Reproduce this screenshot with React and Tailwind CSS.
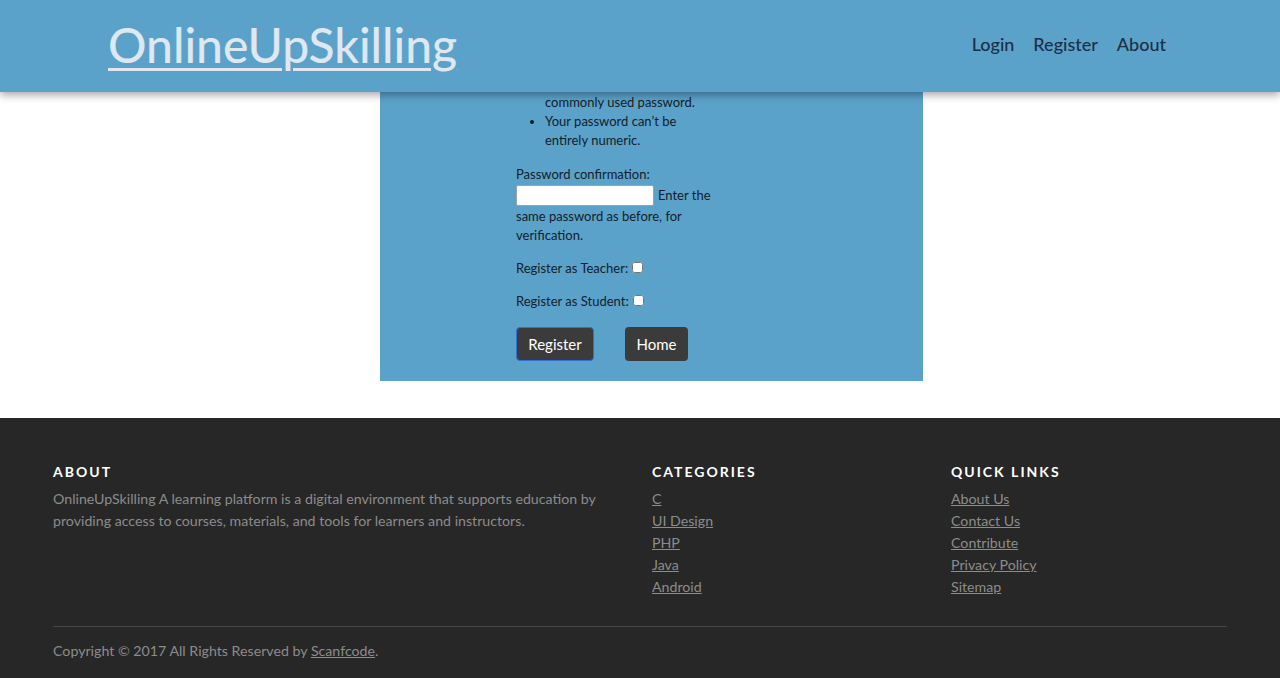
import React from "react";

const font = { fontFamily: "Lato, 'Noto Sans', 'Liberation Sans', sans-serif" };

export default function App() {
  return (
    <div className="relative w-[1280px] h-[678px] overflow-hidden bg-white" style={font}>
      {/* Fixed header overlaying the content */}
      <header className="absolute top-0 left-0 right-0 z-10 h-[92px] bg-[#5ba2ca] shadow-[0_3px_8px_rgba(0,0,0,0.35)] flex items-center justify-between pl-[108px] pr-[114px]">
        <a href="#" className="text-[48px] leading-none font-medium text-[#dfe7f0] underline decoration-[3px] underline-offset-[5px] -mt-[3px]">
          OnlineUpSkilling
        </a>
        <nav className="flex items-center gap-[19px] text-[18px] font-medium text-[#1b2f45] -mt-[3px]">
          <a href="#">Login</a>
          <a href="#">Register</a>
          <a href="#">About</a>
        </nav>
      </header>

      {/* Form box */}
      <div className="flex">
        <div className="ml-[380px] w-[543px] bg-[#5ba2ca] pt-[74px] pb-[20px] pl-[136px] text-[13px] leading-[19px] text-[#121d29]">
          <ul className="list-disc pl-[29px] whitespace-nowrap">
            <li>Your password can’t be a<br />commonly used password.</li>
            <li>Your password can’t be<br />entirely numeric.</li>
          </ul>
          <div className="mt-[15px] whitespace-nowrap">
            <div>Password confirmation:</div>
            <div className="flex items-center h-[23px]">
              <input type="password" className="w-[138px] h-[21px] bg-white border border-[#9aa4ad] rounded-[2px] mr-[4px]" />
              <span>Enter the</span>
            </div>
            <div>same password as before, for<br />verification.</div>
          </div>
          <div className="mt-[14px] flex items-center whitespace-nowrap">
            <span>Register as Teacher:</span>
            <input type="checkbox" className="ml-[4px] w-[11px] h-[11px] -mt-[2px]" />
          </div>
          <div className="mt-[14px] flex items-center whitespace-nowrap">
            <span>Register as Student:</span>
            <input type="checkbox" className="ml-[4px] w-[11px] h-[11px] -mt-[2px]" />
          </div>
          <div className="mt-[16px] flex items-center gap-[31px]">
            <button className="w-[78px] h-[34px] bg-[#3b3b3b] text-white text-[15px] rounded-[4px] border border-[#2f6fd6]">Register</button>
            <button className="w-[63px] h-[34px] bg-[#3b3b3b] text-white text-[15px] rounded-[4px]">Home</button>
          </div>
        </div>
      </div>

      {/* Footer */}
      <footer className="mt-[37px] bg-[#272727] pt-[43px] pb-[16px] px-[53px]">
        <div className="grid grid-cols-[599px_299px_1fr]">
          <div>
            <h3 className="text-[14px] leading-[22px] font-bold tracking-[2px] text-white">ABOUT</h3>
            <p className="mt-[5px] text-[14.2px] leading-[22px] text-[#8c8c8c]">
              OnlineUpSkilling A learning platform is a digital environment that supports education by<br />
              providing access to courses, materials, and tools for learners and instructors.
            </p>
          </div>
          <div>
            <h3 className="text-[14px] leading-[22px] font-bold tracking-[2px] text-white">CATEGORIES</h3>
            <ul className="mt-[5px] text-[14.2px] leading-[22px] text-[#8c8c8c]">
              <li><a href="#" className="underline">C</a></li>
              <li><a href="#" className="underline">UI Design</a></li>
              <li><a href="#" className="underline">PHP</a></li>
              <li><a href="#" className="underline">Java</a></li>
              <li><a href="#" className="underline">Android</a></li>
            </ul>
          </div>
          <div>
            <h3 className="text-[14px] leading-[22px] font-bold tracking-[2px] text-white">QUICK LINKS</h3>
            <ul className="mt-[5px] text-[14.2px] leading-[22px] text-[#8c8c8c]">
              <li><a href="#" className="underline">About Us</a></li>
              <li><a href="#" className="underline">Contact Us</a></li>
              <li><a href="#" className="underline">Contribute</a></li>
              <li><a href="#" className="underline">Privacy Policy</a></li>
              <li><a href="#" className="underline">Sitemap</a></li>
            </ul>
          </div>
        </div>
        <hr className="mt-[28px] border-0 border-t border-[#454545]" />
        <p className="mt-[13px] text-[14.2px] leading-[22px] text-[#8c8c8c]">
          Copyright © 2017 All Rights Reserved by <a href="#" className="underline">Scanfcode</a>.
        </p>
      </footer>
    </div>
  );
}
